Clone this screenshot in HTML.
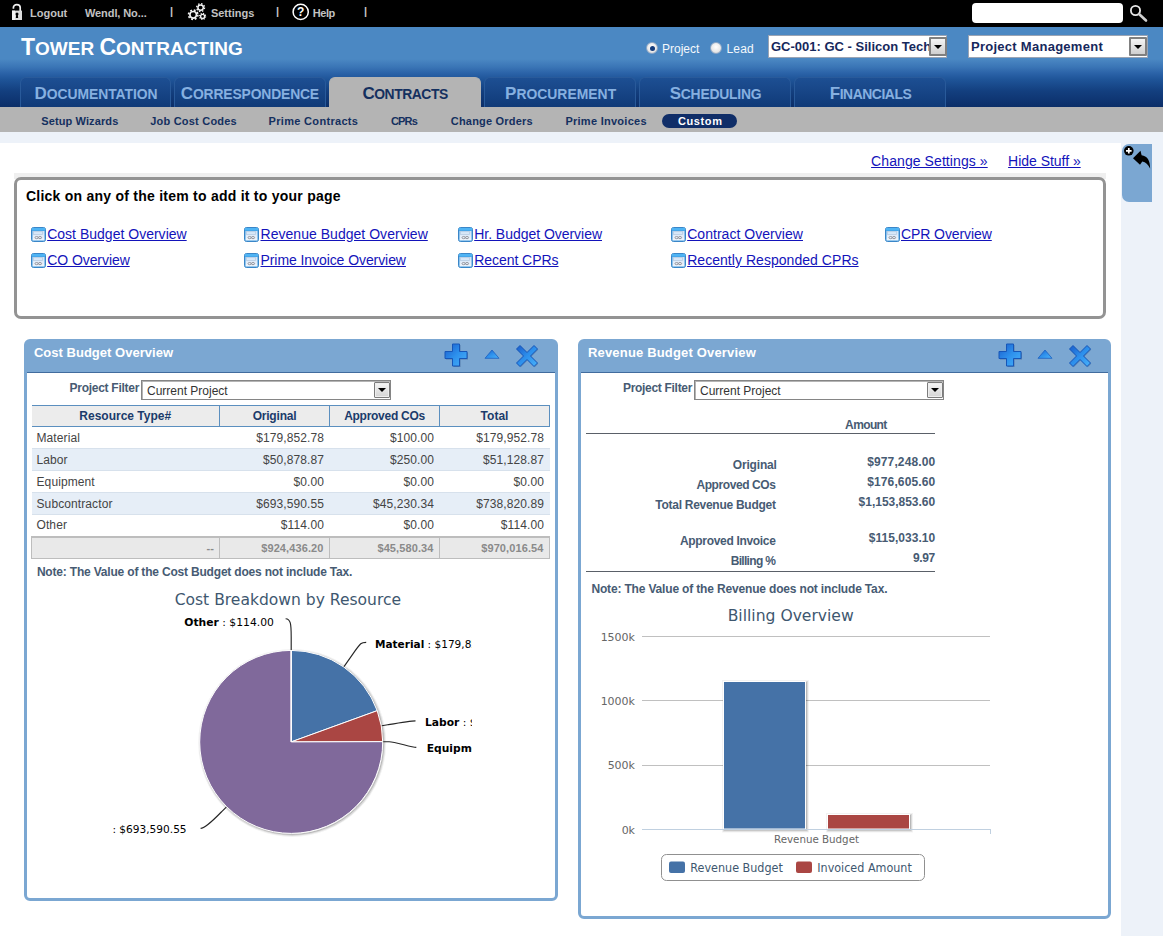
<!DOCTYPE html>
<html><head><meta charset="utf-8"><title>Tower Contracting</title>
<style>
*{box-sizing:border-box;margin:0;padding:0}
html,body{width:1163px;height:936px;overflow:hidden}
body{position:relative;background:#edf2f9;font-family:"Liberation Sans",Arial,sans-serif;font-size:12px;color:#000}
.abs{position:absolute;white-space:nowrap}
#topbar{left:0;top:0;width:1163px;height:27px;background:#000}
.tl{color:#c2c2c2;font-weight:bold;font-size:11px;line-height:13px;top:7px}
.sep{color:#c6c6c6;font-size:11px;font-weight:bold;line-height:13px;top:5px}
#hdr{left:0;top:27px;width:1163px;height:80px;background:linear-gradient(#4b88c3 0,#4b88c3 32px,#3a75b6 40px,#2b63a8 46px,#1f5599 52px,#133f7f 64px,#0b2e68 80px)}
#title{left:21px;top:33px;color:#fff;font-weight:bold;font-size:19px;line-height:28px;letter-spacing:0}
#title b{font-size:23px}
.tab{top:77px;height:30px;border:1px solid #295a9a;border-bottom:0;border-radius:6px 6px 0 0;background:linear-gradient(#1d4f93,#103a78);color:#86b0e0;font-weight:bold;font-size:13.9px;line-height:32px;text-align:center}
.tab b{font-size:17px}
.tab.act{background:#b4b4b4;border-color:#b4b4b4;color:#14305f}
#sub{left:0;top:107px;width:1163px;height:25px;background:#b4b4b4}
.sm{top:114px;font-size:11px;font-weight:bold;color:#14305f;line-height:13px}
#white{left:0;top:143px;width:1121px;height:793px;background:#fff}
a{color:#0000c8;text-decoration:underline}

.lnk{font-size:14px;line-height:16px;color:#1313ba;text-decoration:underline}
.ico{width:15px;height:15px}
#pick{left:14px;top:177px;width:1092px;height:142px;border:3px solid #939393;border-radius:7px;background:#fff}
.panel{border:3px solid #7ba7d2;border-radius:6px;background:#fff}
.phead{left:0;top:0;right:0;height:31px;background:#7ba7d2;border-bottom:1px solid #416c9e}
.ptitle{color:#fff;font-weight:bold;font-size:13px;line-height:15px}
.lab{font-weight:bold;font-size:12px;line-height:14px;color:#475b73}
.sel{height:20px;border:1px solid #858585;box-shadow:inset 1px 1px 0 #b4b4b4;background:#fff;font-size:12px;line-height:20px;color:#333;padding-left:5px}
.selbtn{width:16px;height:16px;border:1px solid #7c7c7c;background:linear-gradient(#f6f6f6,#d4d4d4);border-radius:1px;box-shadow:inset 0 0 0 1px #eee}
.selbtn:after{content:"";position:absolute;left:3px;top:5px;border:4px solid transparent;border-top:4px solid #000;border-bottom:0}
table.g{position:absolute;border-collapse:collapse;font-size:12px;color:#444;table-layout:fixed}
table.g th{height:21px;background:#ececec;border:1px solid #5b8fbf;color:#1b3b6b;font-weight:bold;text-align:center;padding:0}
table.g td{height:22px;border-bottom:1px solid #d7e1ec;text-align:right;padding:0 5.500px 0 0;line-height:14px;letter-spacing:0.1px}
table.g td:first-child{text-align:left;padding-left:5px}
table.g tr.alt td{background:#e6eef7}
table.g tr.ft td{background:#e9e9e9;border:1px solid #bdbdbd;border-top:2px solid #bdbdbd;color:#8a8a8a;font-weight:bold;font-size:11px;height:22px;text-align:right}

.hsel{top:35px;height:23px;background:#fff;border:1px solid #9aa4b4;color:#16285c;font-weight:bold;font-size:13px;line-height:22px;padding-left:2px;overflow:hidden}
.hbtn{width:18px;height:19px;border:2px solid #808080;background:linear-gradient(#f4f4f4,#d0d0d0);border-radius:1px}
.hbtn:after{content:"";position:absolute;left:3px;top:6px;border:4px solid transparent;border-top:4px solid #000;border-bottom:0}
.rad{width:12px;height:12px;border-radius:50%;border:1px solid #8fa9c8;background:radial-gradient(circle at 50% 40%,#fff 0,#e8e8e8 60%,#c8c8c8 100%)}
.rl{color:#f4f8fc;font-size:12px;line-height:14px;top:42px}
</style></head><body>

<svg width="0" height="0" style="position:absolute"><defs>
<linearGradient id="gi" x1="0" y1="0" x2="0" y2="1"><stop offset="0" stop-color="#cfe2f6"/><stop offset="1" stop-color="#f2f6fc"/></linearGradient>
<symbol id="wico" viewBox="0 0 15 15"><rect x="0.5" y="0.5" width="14" height="14" rx="2" fill="#3f9be0" stroke="#3a86c8"/><rect x="1" y="1" width="13" height="2.5" fill="#4fb4f4"/><rect x="1.500" y="4" width="12" height="9.500" fill="url(#gi)"/><rect x="2.5" y="4.5" width="9" height="3" fill="none" stroke="#b9cde3" stroke-width="0.8"/><ellipse cx="5.6" cy="10.6" rx="1.6" ry="1.1" fill="none" stroke="#8c8c94" stroke-width="0.9"/><ellipse cx="9" cy="10.6" rx="1.6" ry="1.1" fill="none" stroke="#8c8c94" stroke-width="0.9"/></symbol>
<linearGradient id="gb" x1="0" y1="0" x2="1" y2="1"><stop offset="0" stop-color="#1a5ccb"/><stop offset="0.5" stop-color="#2d90ec"/><stop offset="1" stop-color="#49b2fa"/></linearGradient>
<symbol id="iplus" viewBox="0 0 25 25"><path d="M8.500 1h7v7.500h7.500v7h-7.500v7.500h-7v-7.500h-7.500v-7h7.500z" fill="#3d6496" opacity="0.6" transform="translate(1,1)"/><path d="M8.500 1h7v7.500h7.500v7h-7.500v7.500h-7v-7.500h-7.500v-7h7.500z" fill="url(#gb)" stroke="#1656b8" stroke-width="1" stroke-linejoin="round"/></symbol>
<symbol id="itri" viewBox="0 0 16 10"><path d="M1 9.300L8 1L15 9.300z" fill="url(#gb)" stroke="#1c5fc0" stroke-width="0.8" stroke-linejoin="round"/></symbol>
<symbol id="ix" viewBox="0 0 24 24"><path d="M5 1.500L12 8.500L19 1.500L22.500 5L15.500 12L22.500 19L19 22.500L12 15.500L5 22.500L1.500 19L8.500 12L1.500 5z" fill="#4a6f9c" opacity="0.5" transform="translate(0.8,0.8)"/><path d="M5 1.500L12 8.500L19 1.500L22.500 5L15.500 12L22.500 19L19 22.500L12 15.500L5 22.500L1.500 19L8.500 12L1.500 5z" fill="url(#gb)" stroke="#1656b8" stroke-width="1" stroke-linejoin="round"/></symbol>
</defs></svg>
<div id="topbar" class="abs"></div>
<div id="f_logout" class="abs tl" style="top:7px;left:30.0px;letter-spacing:0.000px">Logout</div>
<div id="f_wendl_no" class="abs tl" style="top:7px;left:85.0px;letter-spacing:-0.091px">Wendl, No...</div>
<div class="abs sep" style="left:170px">|</div>
<div id="f_settings" class="abs tl" style="top:7px;left:210.9px;letter-spacing:0.000px">Settings</div>
<div class="abs sep" style="left:276px">|</div>
<div id="f_help" class="abs tl" style="top:7px;left:312.8px;letter-spacing:-0.467px">Help</div>
<div class="abs sep" style="left:364px">|</div>
<div class="abs" style="left:972px;top:3px;width:151px;height:20px;background:#fff;border-radius:4px"></div>

<svg class="abs" style="left:10px;top:2px" width="14" height="20" viewBox="0 0 14 20"><path d="M3.400 6.800V5.600C3.400 1.600 10.200 1.600 10.200 5.600V9.500" fill="none" stroke="#f0f0f0" stroke-width="1.700"/><rect x="2" y="8.600" width="10" height="9.400" fill="#dcdcdc"/><rect x="2" y="8.600" width="3" height="9.400" fill="#f4f4f4"/><circle cx="7" cy="12" r="1.500" fill="#000"/><path d="M6.300 12h1.400l0.500 4h-2.400z" fill="#000"/></svg>
<svg class="abs" style="left:186px;top:2px" width="24" height="22" viewBox="0 0 24 22"><g fill="none" stroke="#f2f2f2"><circle cx="7.200" cy="12.800" r="3.300" stroke-width="1.700"/><circle cx="7.200" cy="12.800" r="4.700" stroke-width="1.600" stroke-dasharray="1.850 1.850"/><circle cx="14.600" cy="5.600" r="2.700" stroke-width="1.500"/><circle cx="14.600" cy="5.600" r="3.900" stroke-width="1.400" stroke-dasharray="1.530 1.530"/><circle cx="16.600" cy="14.400" r="2" stroke-width="1.400"/><circle cx="16.600" cy="14.400" r="3" stroke-width="1.200" stroke-dasharray="1.180 1.180"/></g></svg>
<svg class="abs" style="left:291px;top:2px" width="20" height="20" viewBox="0 0 20 20"><circle cx="9.700" cy="9.900" r="7.600" fill="none" stroke="#fff" stroke-width="1.500"/><text x="9.700" y="14.200" text-anchor="middle" font-family="Liberation Sans, Arial, sans-serif" font-weight="bold" font-size="12" fill="#fff">?</text></svg>
<svg class="abs" style="left:1129px;top:4px" width="20" height="19" viewBox="0 0 20 19"><circle cx="6.500" cy="6.500" r="4.600" fill="none" stroke="#e8e8e8" stroke-width="1.800"/><path d="M10 10L17 16.500" stroke="#d0d0d0" stroke-width="2.600" stroke-linecap="round"/></svg>
<div id="hdr" class="abs"></div>
<div id="title" class="abs"><b>T</b>OWER <b>C</b>ONTRACTING</div>


<div class="abs rad" style="left:646px;top:42px"></div><div class="abs" style="left:649.500px;top:45.500px;width:5px;height:5px;border-radius:50%;background:#143c7c"></div>
<div id="f_project" class="abs rl" style="top:42px;left:662.0px;letter-spacing:0.000px">Project</div>
<div class="abs rad" style="left:710px;top:42px"></div>
<div id="f_lead" class="abs rl" style="top:42px;left:726.5px;letter-spacing:0.167px">Lead</div>
<div class="abs hsel" style="left:768px;width:179px;padding-left:2px">GC-001: GC - Silicon Tech</div>
<div class="abs hbtn" style="left:929px;top:37px"></div>
<div class="abs hsel" style="left:968px;width:180px;letter-spacing:0.27px">Project Management</div>
<div class="abs hbtn" style="left:1129px;top:37px"></div>
<div class="abs tab" style="left:20px;width:151px"><span id="f_tab_documentation" style="letter-spacing:-0.042px;position:relative;left:0.5px"><b>D</b>OCUMENTATION</span></div>
<div class="abs tab" style="left:174px;width:152px"><span id="f_tab_correspondence" style="letter-spacing:-0.162px;position:relative;left:-0.1px"><b>C</b>ORRESPONDENCE</span></div>
<div class="abs tab act" style="left:329px;width:152px"><span id="f_tab_contracts" style="letter-spacing:-0.450px;position:relative;left:0.1px"><b>C</b>ONTRACTS</span></div>
<div class="abs tab" style="left:484px;width:152px"><span id="f_tab_procurement" style="letter-spacing:0.020px;position:relative;left:0.6px"><b>P</b>ROCUREMENT</span></div>
<div class="abs tab" style="left:639px;width:152px"><span id="f_tab_scheduling" style="letter-spacing:-0.222px;position:relative;left:0.5px"><b>S</b>CHEDULING</span></div>
<div class="abs tab" style="left:794px;width:152px"><span id="f_tab_financials" style="letter-spacing:-0.444px;position:relative;left:0.5px"><b>F</b>INANCIALS</span></div>

<div id="sub" class="abs"></div>
<div id="f_setup_wizards" class="abs sm" style="top:115px;left:41.3px;letter-spacing:0.108px">Setup Wizards</div>
<div id="f_job_cost_codes" class="abs sm" style="top:115px;left:150.2px;letter-spacing:0.215px">Job Cost Codes</div>
<div id="f_prime_contracts" class="abs sm" style="top:115px;left:268.6px;letter-spacing:0.314px">Prime Contracts</div>
<div id="f_cprs" class="abs sm" style="top:115px;left:390.9px;letter-spacing:-0.800px">CPRs</div>
<div id="f_change_orders" class="abs sm" style="top:115px;left:450.8px;letter-spacing:0.199px">Change Orders</div>
<div id="f_prime_invoices" class="abs sm" style="top:115px;left:565.4px;letter-spacing:0.268px">Prime Invoices</div>
<div class="abs" style="left:662px;top:114px;width:75px;height:14px;border-radius:7px;background:#102e68"></div>
<div id="f_custom" class="abs sm" style="top:115px;left:678.0px;color:#fff;letter-spacing:0.600px">Custom</div>

<div id="white" class="abs"></div>

<div id="f_change_settings" class="abs lnk" style="left:871.1px;top:153px;letter-spacing:0.082px">Change Settings »</div>
<div id="f_hide_stuff" class="abs lnk" style="left:1008.1px;top:153px;letter-spacing:-0.026px">Hide Stuff »</div>
<div class="abs" style="left:14px;top:173px;width:1092px;height:6px;background:#efefef"></div>
<div id="pick" class="abs"></div>
<div id="f_click" class="abs" style="left:25.9px;top:188px;font-weight:bold;font-size:14px;line-height:16px;letter-spacing:0.246px">Click on any of the item to add it to your page</div>
<svg class="abs ico" style="left:31px;top:227px"><use href="#wico"/></svg><div id="f_cost_budget_overvi" class="abs lnk" style="left:47.2px;top:226px;letter-spacing:0.010px">Cost Budget Overview</div>
<svg class="abs ico" style="left:244px;top:227px"><use href="#wico"/></svg><div id="f_revenue_budget_ove" class="abs lnk" style="left:260.5px;top:226px;letter-spacing:0.033px">Revenue Budget Overview</div>
<svg class="abs ico" style="left:458px;top:227px"><use href="#wico"/></svg><div id="f_hr_budget_overview" class="abs lnk" style="left:474.2px;top:226px;letter-spacing:-0.031px">Hr. Budget Overview</div>
<svg class="abs ico" style="left:671px;top:227px"><use href="#wico"/></svg><div id="f_contract_overview" class="abs lnk" style="left:687.2px;top:226px;letter-spacing:0.038px">Contract Overview</div>
<svg class="abs ico" style="left:885px;top:227px"><use href="#wico"/></svg><div id="f_cpr_overview" class="abs lnk" style="left:901.0px;top:226px;letter-spacing:-0.084px">CPR Overview</div>
<svg class="abs ico" style="left:31px;top:253px"><use href="#wico"/></svg><div id="f_co_overview" class="abs lnk" style="left:47.2px;top:252px;letter-spacing:-0.067px">CO Overview</div>
<svg class="abs ico" style="left:244px;top:253px"><use href="#wico"/></svg><div id="f_prime_invoice_over" class="abs lnk" style="left:260.5px;top:252px;letter-spacing:-0.075px">Prime Invoice Overview</div>
<svg class="abs ico" style="left:458px;top:253px"><use href="#wico"/></svg><div id="f_recent_cprs" class="abs lnk" style="left:474.2px;top:252px;letter-spacing:-0.047px">Recent CPRs</div>
<svg class="abs ico" style="left:671px;top:253px"><use href="#wico"/></svg><div id="f_recently_responded" class="abs lnk" style="left:687.2px;top:252px;letter-spacing:0.042px">Recently Responded CPRs</div>

<div class="abs" style="left:1122px;top:144px;width:30px;height:58px;background:#7ba7d2;border-radius:7px 0 0 7px"></div>
<svg class="abs" style="left:1122px;top:144px" width="30" height="28" viewBox="0 0 30 28"><circle cx="6.800" cy="6.800" r="4.800" fill="#000"/><path d="M4 6.800h5.600M6.800 4v5.600" stroke="#fff" stroke-width="1.700"/><path d="M11 14.300L18.500 6.800L19.600 11.200C25 11.800 28.300 16.500 28.100 24.500C26 20.500 23.800 18.200 20.300 17.600L18 20.800z" fill="#000"/></svg>

<div class="abs panel" style="left:24px;top:339px;width:534px;height:562px">
 <div class="abs phead"></div>
</div>
<div id="f_cost_budget_overvi2" class="abs ptitle" style="left:33.9px;top:345px;letter-spacing:0.026px">Cost Budget Overview</div>
<div id="f_project_filter" class="abs lab" style="left:69.5px;top:381px;letter-spacing:-0.268px">Project Filter</div>
<div class="abs sel" style="left:141px;top:380px;width:250px">Current Project</div>
<div class="abs selbtn" style="left:374px;top:382px"></div>
<table class="g" style="left:31px;top:405px;width:518px">
<colgroup><col style="width:188px"><col style="width:110px"><col style="width:110px"><col style="width:110px"></colgroup>
<tr><th style="border-left:0">Resource Type#</th><th style="letter-spacing:-0.2px">Original</th><th style="letter-spacing:-0.28px">Approved COs</th><th>Total</th></tr>
<tr><td>Material</td><td>$179,852.78</td><td>$100.00</td><td>$179,952.78</td></tr>
<tr class="alt"><td>Labor</td><td>$50,878.87</td><td>$250.00</td><td>$51,128.87</td></tr>
<tr><td>Equipment</td><td>$0.00</td><td>$0.00</td><td>$0.00</td></tr>
<tr class="alt"><td>Subcontractor</td><td>$693,590.55</td><td>$45,230.34</td><td>$738,820.89</td></tr>
<tr><td>Other</td><td>$114.00</td><td>$0.00</td><td>$114.00</td></tr>
<tr class="ft"><td style="text-align:right;padding-right:5px">--</td><td>$924,436.20</td><td>$45,580.34</td><td>$970,016.54</td></tr>
</table>
<div id="f_note_the_value_of_" class="abs lab" style="left:36.9px;top:565px;letter-spacing:-0.188px">Note: The Value of the Cost Budget does not include Tax.</div>
<svg class="abs" style="left:111px;top:580px" width="361" height="300" viewBox="111 580 361 300">
<text x="287.9" y="604.5" text-anchor="middle" font-family="DejaVu Sans, Liberation Sans, sans-serif" font-size="16" fill="#3E576F" textLength="226.5" lengthAdjust="spacingAndGlyphs">Cost Breakdown by Resource</text>
<g fill="none" stroke="#000" transform="translate(1,1)"><circle cx="291.2" cy="741.9" r="91.5" stroke-width="5" stroke-opacity="0.05"/><circle cx="291.2" cy="741.9" r="91.5" stroke-width="3" stroke-opacity="0.1"/><circle cx="291.2" cy="741.9" r="91.5" stroke-width="1" stroke-opacity="0.15"/></g>
<path d="M291.20 741.90L291.20 650.40A91.50 91.50 0 0 1 377.20 710.66Z" fill="#4572A7" stroke="#fff" stroke-width="1" stroke-linejoin="round"/>
<path d="M291.20 741.90L377.20 710.66A91.50 91.50 0 0 1 382.70 741.67Z" fill="#AA4643" stroke="#fff" stroke-width="1" stroke-linejoin="round"/>
<path d="M291.20 741.90L382.70 741.67A91.50 91.50 0 1 1 291.13 650.40Z" fill="#80699B" stroke="#fff" stroke-width="1" stroke-linejoin="round"/>
<path d="M291.20 741.90L291.13 650.40A91.50 91.50 0 0 1 291.20 650.40Z" fill="#3D96AE" stroke="#fff" stroke-width="1" stroke-linejoin="round"/>

<g fill="none" stroke="#262626" stroke-width="1.150">
<path d="M285.6 618.7C290.6 618.7 291.2 624 291.2 637L291.2 650"/>
<path d="M366.200 642.300C361.200 642.300 361.200 642.300 352.600 654.300L344 666.600"/>
<path d="M415.500 720.900C410.500 720.900 393.600 723.800 387.700 724.800L381.800 725.800"/>
<path d="M416.300 747.400C411.300 747.400 395.200 741.700 389.200 741.700L383.200 741.700"/>
<path d="M200.600 828.400C205.600 828.400 217.800 815.600 222 811.300L226.300 807.100"/>
</g>
<g font-family="DejaVu Sans, Liberation Sans, sans-serif" font-size="11" fill="#000">
<text x="184.300" y="625.800" textLength="89.600" lengthAdjust="spacingAndGlyphs"><tspan font-weight="bold">Other</tspan> : $114.00</text>
<text x="375" y="647.700" textLength="126.500" lengthAdjust="spacingAndGlyphs"><tspan font-weight="bold">Material</tspan> : $179,852.78</text>
<text x="425" y="725.500" textLength="106.200" lengthAdjust="spacingAndGlyphs"><tspan font-weight="bold">Labor</tspan> : $50,878.87</text>
<text x="426.800" y="751.700" textLength="106" lengthAdjust="spacingAndGlyphs"><tspan font-weight="bold">Equipment</tspan> : $0.00</text>
<text x="186.600" y="833.300" text-anchor="end" textLength="162.500" lengthAdjust="spacingAndGlyphs"><tspan font-weight="bold">Subcontractor</tspan> : $693,590.55</text>
</g>
</svg>


<div class="abs panel" style="left:578px;top:339px;width:533px;height:580px">
 <div class="abs phead"></div>
</div>
<div id="f_revenue_budget_ove2" class="abs ptitle" style="left:588.0px;top:345px;letter-spacing:0.173px">Revenue Budget Overview</div>
<div id="f_project_filter2" class="abs lab" style="left:623.0px;top:381px;letter-spacing:-0.308px">Project Filter</div>
<div class="abs sel" style="left:694px;top:380px;width:250px">Current Project</div>
<div class="abs selbtn" style="left:927px;top:382px"></div>
<div id="f_amount" class="abs lab" style="left:845.1px;top:418px;letter-spacing:-0.620px">Amount</div>
<div class="abs" style="left:586px;top:433px;width:349px;height:1px;background:#5a6068"></div>
<div id="f_original" class="abs lab r" style="top:458px;letter-spacing:-0.171px;left:732.8px">Original</div>
<div id="f_977_248_00" class="abs lab r" style="top:455px;letter-spacing:0.130px;left:867.2px">$977,248.00</div>
<div id="f_approved_cos" class="abs lab r" style="top:478px;letter-spacing:-0.408px;left:696.4px">Approved COs</div>
<div id="f_176_605_60" class="abs lab r" style="top:475px;letter-spacing:0.130px;left:867.2px">$176,605.60</div>
<div id="f_total_revenue_budg" class="abs lab r" style="top:498px;letter-spacing:-0.273px;left:655.3px">Total Revenue Budget</div>
<div id="f_1_153_853_60" class="abs lab r" style="top:495px;letter-spacing:-0.016px;left:858.6px">$1,153,853.60</div>
<div id="f_approved_invoice" class="abs lab r" style="top:534px;letter-spacing:-0.320px;left:680.0px">Approved Invoice</div>
<div id="f_115_033_10" class="abs lab r" style="top:531px;letter-spacing:0.040px;left:868.7px">$115,033.10</div>
<div id="f_billing" class="abs lab r" style="top:554px;letter-spacing:-0.688px;left:730.7px">Billing %</div>
<div id="f_9_97" class="abs lab r" style="top:551px;letter-spacing:-0.433px;left:913.1px">9.97</div>
<div class="abs" style="left:586px;top:571px;width:349px;height:1px;background:#5a6068"></div>
<div id="f_note_the_value_of_2" class="abs lab" style="left:591.4px;top:582px;letter-spacing:-0.165px">Note: The Value of the Revenue does not include Tax.</div>
<svg class="abs" style="left:591px;top:596px" width="400" height="300" viewBox="591 596 400 300">
<text x="790.700" y="620.500" text-anchor="middle" font-family="DejaVu Sans, Liberation Sans, sans-serif" font-size="16" fill="#3E576F" textLength="126" lengthAdjust="spacingAndGlyphs">Billing Overview</text>
<g stroke="#C0C0C0" stroke-width="1"><path d="M642 636.500H990M642 700.500H990M642 765.500H990"/></g>

<g fill="none" stroke="#000" transform="translate(1,1)"><rect x="723.500" y="681.500" width="82" height="147.500" stroke-width="5" stroke-opacity="0.05"/><rect x="723.500" y="681.500" width="82" height="147.500" stroke-width="3" stroke-opacity="0.1"/><rect x="723.500" y="681.500" width="82" height="147.500" stroke-width="1" stroke-opacity="0.15"/>
<rect x="827.500" y="814.500" width="82" height="14.500" stroke-width="5" stroke-opacity="0.05"/><rect x="827.500" y="814.500" width="82" height="14.500" stroke-width="3" stroke-opacity="0.1"/><rect x="827.500" y="814.500" width="82" height="14.500" stroke-width="1" stroke-opacity="0.15"/></g>
<rect x="723.500" y="681.500" width="82" height="147.500" fill="#4572A7" stroke="#fff" stroke-width="1"/>
<rect x="827.500" y="814.500" width="82" height="14.500" fill="#AA4643" stroke="#fff" stroke-width="1"/>
<path d="M642 829.500H990" stroke="#C0D0E0" stroke-width="1"/><path d="M990.500 829V834" stroke="#C0D0E0"/>
<g font-family="DejaVu Sans, Liberation Sans, sans-serif" font-size="11" fill="#666" text-anchor="end">
<text x="635" y="640.500">1500k</text><text x="635" y="704.500">1000k</text><text x="635" y="769">500k</text><text x="635" y="833.500">0k</text>
</g>
<text x="816.500" y="842.700" text-anchor="middle" font-family="DejaVu Sans, Liberation Sans, sans-serif" font-size="11" fill="#666" textLength="85" lengthAdjust="spacingAndGlyphs">Revenue Budget</text>
<rect x="661.500" y="854.500" width="263" height="26" rx="5" fill="#fff" stroke="#909090" stroke-width="1"/>
<rect x="669" y="861.500" width="16" height="11.500" rx="2" fill="#4572A7"/>
<rect x="796" y="861.500" width="16" height="11.500" rx="2" fill="#AA4643"/>
<g font-family="DejaVu Sans, Liberation Sans, sans-serif" font-size="12" fill="#3E576F">
<text x="690.300" y="871.500" textLength="92.500" lengthAdjust="spacingAndGlyphs">Revenue Budget</text>
<text x="817.300" y="871.500" textLength="94.500" lengthAdjust="spacingAndGlyphs">Invoiced Amount</text>
</g>
</svg>

<svg class="abs" style="left:444px;top:343px" width="25" height="25"><use href="#iplus"/></svg><svg class="abs" style="left:484px;top:349.300px" width="16" height="10"><use href="#itri"/></svg><svg class="abs" style="left:515px;top:344px" width="24" height="24"><use href="#ix"/></svg>
<svg class="abs" style="left:997.500px;top:343px" width="25" height="25"><use href="#iplus"/></svg><svg class="abs" style="left:1037.300px;top:349.300px" width="16" height="10"><use href="#itri"/></svg><svg class="abs" style="left:1068px;top:344px" width="24" height="24"><use href="#ix"/></svg>

</body></html>
